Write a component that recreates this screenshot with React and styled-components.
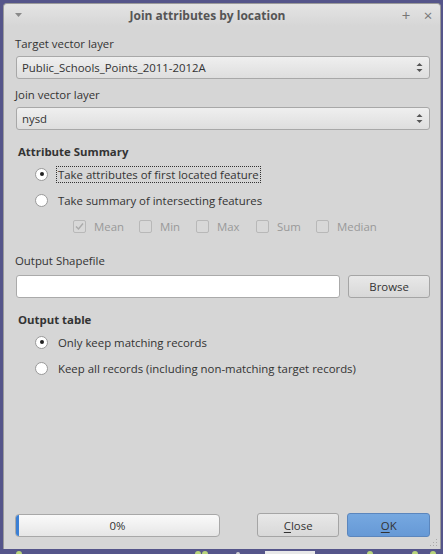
import React from "react";
import styled, { createGlobalStyle } from "styled-components";

const Global = createGlobalStyle`
  html, body {
    margin: 0;
    padding: 0;
    background: #55558a;
    height: 554px;
    overflow: hidden;
  }
  body {
    font-family: "Open Sans", "DejaVu Sans", sans-serif;
    font-size: 11.4px;
    color: #333;
  }
`;

const Window = styled.div`
  margin: 3px 2px 0 3px;
  width: 438px;
  height: 546px;
  box-sizing: border-box;
  border: 1px solid #9a9a9a;
  border-bottom: none;
  border-radius: 4px 4px 0 0;
  background: #d6d6d6;
  display: flex;
  flex-direction: column;
  position: relative;
`;

const TitleBar = styled.div`
  height: 22px;
  display: flex;
  align-items: center;
  padding: 0 3px 0 10px;
  background: linear-gradient(#e4e4e4, #d6d6d6);
  border-radius: 4px 4px 0 0;
  color: #555;
`;

const Title = styled.div`
  flex: 1;
  text-align: center;
  font-weight: bold;
  font-size: 12px;
`;

const TitleIcon = styled.span`
  color: #777;
  font-size: ${(p) => p.size || 14}px;
  width: ${(p) => p.w || 16}px;
  display: flex;
  justify-content: center;
`;

const Body = styled.div`
  flex: 1;
  display: flex;
  flex-direction: column;
  padding: 8px 10px 0 11px;
`;

const Label = styled.div`
  height: 20px;
  line-height: 20px;
  margin-top: ${(p) => p.mt || 0}px;
`;

const Combo = styled.div`
  margin: 2px 0 0 1px;
  height: 23px;
  box-sizing: border-box;
  border: 1px solid #a8a8a8;
  border-radius: 3px;
  background: linear-gradient(#efefef, #dedede);
  display: flex;
  align-items: center;
  padding: 0 6px 0 5px;
  margin-bottom: ${(p) => p.mb || 0}px;
`;

const ComboText = styled.span`
  flex: 1;
`;

const Section = styled.div`
  font-weight: bold;
  padding-left: 3px;
  height: 19px;
  line-height: 19px;
  margin-top: ${(p) => p.mt || 0}px;
`;

const RadioRow = styled.div`
  display: flex;
  align-items: center;
  height: 26px;
  padding-left: 20px;
`;

const RadioDot = styled.span`
  width: 11px;
  height: 11px;
  border-radius: 50%;
  border: 1px solid #999;
  background: #fff;
  margin-right: 8px;
  display: flex;
  align-items: center;
  justify-content: center;
  &::after {
    content: "";
    width: 4px;
    height: 4px;
    border-radius: 50%;
    background: ${(p) => (p.checked ? "#222" : "transparent")};
  }
`;

const RadioText = styled.span`
  padding: 0 1px;
  border: 1px dotted ${(p) => (p.focus ? "#333" : "transparent")};
`;

const CheckRow = styled.div`
  display: flex;
  align-items: center;
  height: 26px;
  padding-left: 58px;
  color: #999;
`;

const Check = styled.label`
  display: flex;
  align-items: center;
  width: ${(p) => p.w}px;
`;

const Box = styled.span`
  width: 11px;
  height: 11px;
  border: 1px solid #b8b8b8;
  border-radius: 2px;
  background: #d8d8d8;
  margin-right: 8px;
  display: flex;
  align-items: center;
  justify-content: center;
`;

const OutRow = styled.div`
  display: flex;
  gap: 8px;
  margin: 4px 0 0 1px;
`;

const TextInput = styled.div`
  width: 325px;
  height: 23px;
  box-sizing: border-box;
  border: 1px solid #aaa;
  border-radius: 3px;
  background: #fff;
`;

const Button = styled.div`
  width: ${(p) => p.w || 83}px;
  height: ${(p) => p.h || 24}px;
  box-sizing: border-box;
  border: 1px solid ${(p) => (p.primary ? "#5b86bd" : "#a5a5a5")};
  border-radius: 3px;
  background: ${(p) =>
    p.primary
      ? "linear-gradient(#76a8e0, #6699d6)"
      : "linear-gradient(#e8e8e8, #d8d8d8)"};
  display: flex;
  align-items: center;
  justify-content: center;
  color: #333;
  u {
    text-decoration: underline;
    text-underline-offset: 2px;
  }
`;

const Footer = styled.div`
  margin-top: auto;
  display: flex;
  align-items: center;
  padding: 0 10px 12px 11px;
`;

const Progress = styled.div`
  width: 206px;
  height: 23px;
  box-sizing: border-box;
  border: 1px solid #a8a8a8;
  border-radius: 4px;
  background: linear-gradient(#fafafa, #e6e6e6);
  position: relative;
  display: flex;
  align-items: center;
  justify-content: center;
  margin-right: 37px;
  &::before {
    content: "";
    position: absolute;
    left: 0;
    top: 0;
    bottom: 0;
    width: 3px;
    border-radius: 3px 0 0 3px;
    background: #3b7fd4;
  }
`;

const Grip = styled.svg`
  position: absolute;
  right: 2px;
  bottom: 2px;
`;

const Ground = styled.svg`
  display: block;
`;

function Radio({ checked, focus, children }) {
  return (
    <RadioRow>
      <RadioDot checked={checked} />
      <RadioText focus={focus}>{children}</RadioText>
    </RadioRow>
  );
}

function CheckBox({ checked, label, w }) {
  return (
    <Check w={w}>
      <Box>
        {checked && (
          <svg width="9" height="9" viewBox="0 0 9 9">
            <path d="M1 4.5 L3.5 7 L8 1.5" fill="none" stroke="#aaa" strokeWidth="1.4" />
          </svg>
        )}
      </Box>
      {label}
    </Check>
  );
}

function ComboArrows() {
  return (
    <svg width="7" height="11" viewBox="0 0 7 11">
      <path d="M0.5 4 L3.5 1 L6.5 4 Z" fill="#555" />
      <path d="M0.5 7 L3.5 10 L6.5 7 Z" fill="#555" />
    </svg>
  );
}

export default function App() {
  return (
    <>
      <Global />
      <Window>
        <TitleBar>
          <TitleIcon w={8}>
            <svg width="7" height="4" viewBox="0 0 7 4">
              <path d="M0 0 L7 0 L3.5 4 Z" fill="#8a8a8a" />
            </svg>
          </TitleIcon>
          <Title>Join attributes by location</Title>
          <TitleIcon size={15} w={26}>+</TitleIcon>
          <TitleIcon size={15} w={18}>×</TitleIcon>
        </TitleBar>
        <Body>
          <Label>Target vector layer</Label>
          <Combo mb={6}>
            <ComboText>Public_Schools_Points_2011-2012A</ComboText>
            <ComboArrows />
          </Combo>
          <Label>Join vector layer</Label>
          <Combo>
            <ComboText>nysd</ComboText>
            <ComboArrows />
          </Combo>
          <Section mt={12}>Attribute Summary</Section>
          <Radio checked focus>
            Take attributes of first located feature
          </Radio>
          <Radio>Take summary of intersecting features</Radio>
          <CheckRow>
            <CheckBox checked label="Mean" w={66} />
            <CheckBox label="Min" w={57} />
            <CheckBox label="Max" w={60} />
            <CheckBox label="Sum" w={60} />
            <CheckBox label="Median" />
          </CheckRow>
          <Label mt={12}>Output Shapefile</Label>
          <OutRow>
            <TextInput />
            <Button w={82} h={23}>Browse</Button>
          </OutRow>
          <Section mt={12}>Output table</Section>
          <Radio checked>Only keep matching records</Radio>
          <Radio>Keep all records (including non-matching target records)</Radio>
        </Body>
        <Footer>
          <Progress>0%</Progress>
          <Button w={83} style={{ marginRight: 8 }}>
            <span>
              <u>C</u>lose
            </span>
          </Button>
          <Button w={83} primary>
            <span>
              <u>O</u>K
            </span>
          </Button>
        </Footer>
        <Grip width="8" height="8" viewBox="0 0 8 8">
          <g fill="#aaa">
            <rect x="6" y="0" width="1" height="1" />
            <rect x="3" y="3" width="1" height="1" />
            <rect x="6" y="3" width="1" height="1" />
            <rect x="0" y="6" width="1" height="1" />
            <rect x="3" y="6" width="1" height="1" />
            <rect x="6" y="6" width="1" height="1" />
          </g>
        </Grip>
      </Window>
      <Ground width="443" height="5" viewBox="0 0 443 5">
        <circle cx="19" cy="5" r="3" fill="#b8d47a" />
        <circle cx="198" cy="5" r="3" fill="#b8d47a" />
        <circle cx="205" cy="5" r="3" fill="#b8d47a" />
        <circle cx="238" cy="5" r="2" fill="#d0d0d0" />
        <rect x="265" y="2" width="50" height="3" fill="#e8e8e8" />
        <circle cx="370" cy="5" r="3" fill="#b8d47a" />
        <circle cx="415" cy="5" r="3" fill="#b8d47a" />
        <circle cx="433" cy="5" r="3" fill="#b8d47a" />
      </Ground>
    </>
  );
}
